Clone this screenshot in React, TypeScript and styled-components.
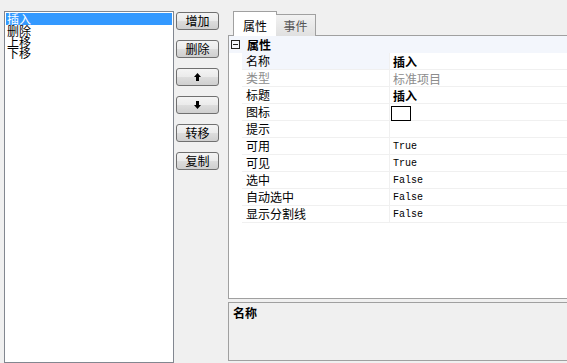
import { FC } from 'react';
import styled, { createGlobalStyle, css } from 'styled-components';

const GlobalStyle = createGlobalStyle`
	html, body {
		margin: 0;
		padding: 0;
		background: #f0f0f0;
		width: 567px;
		height: 363px;
		overflow: hidden;
	}
	body {
		font-family: 'Noto Sans CJK SC', 'Liberation Sans', sans-serif;
		font-size: 12px;
		color: #000;
	}
`;

interface PropRow {
	name: string;
	value?: string;
	bold?: boolean;
	mono?: boolean;
	disabled?: boolean;
	selected?: boolean;
	icon?: boolean;
}

const ITEMS = ['插入', '删除', '上移', '下移'];

const ROWS: PropRow[] = [
	{ name: '名称', value: '插入', bold: true, selected: true },
	{ name: '类型', value: '标准项目', disabled: true },
	{ name: '标题', value: '插入', bold: true },
	{ name: '图标', icon: true },
	{ name: '提示' },
	{ name: '可用', value: 'True', mono: true },
	{ name: '可见', value: 'True', mono: true },
	{ name: '选中', value: 'False', mono: true },
	{ name: '自动选中', value: 'False', mono: true },
	{ name: '显示分割线', value: 'False', mono: true },
];

const Arrow: FC<{ down?: boolean }> = ({ down }) => (
	<svg width="7" height="8" viewBox="0 0 7 8" style={{ transform: down ? 'rotate(180deg)' : undefined }}>
		<path d="M3.5 0 L7 4 L5 4 L5 8 L2 8 L2 4 L0 4 Z" fill="#000" />
	</svg>
);

export default function App() {
	return (
		<>
			<GlobalStyle />
			<Root>
				<ListBox>
					{ITEMS.map((item, i) => (
						<ListItem key={item} $selected={i === 0}>
							{item}
						</ListItem>
					))}
				</ListBox>
				<ButtonColumn>
					<Button>增加</Button>
					<Button>删除</Button>
					<Button>
						<Arrow />
					</Button>
					<Button>
						<Arrow down />
					</Button>
					<Button>转移</Button>
					<Button>复制</Button>
				</ButtonColumn>
				<RightPane>
					<TabStrip>
						<Tab $active>属性</Tab>
						<Tab>事件</Tab>
					</TabStrip>
					<Grid>
						<CategoryRow>
							<Collapse />
							<CategoryLabel>属性</CategoryLabel>
						</CategoryRow>
						{ROWS.map((row) => (
							<Row key={row.name}>
								<Gutter />
								<NameCell $selected={!!row.selected} $disabled={!!row.disabled}>
									{row.name}
								</NameCell>
								<ValueCell
									$bold={!!row.bold}
									$mono={!!row.mono}
									$disabled={!!row.disabled}
								>
									{row.icon ? <IconBox /> : row.value}
								</ValueCell>
							</Row>
						))}
					</Grid>
					<Description>
						<DescTitle>名称</DescTitle>
					</Description>
				</RightPane>
			</Root>
		</>
	);
}

const Root = styled.div`
	display: flex;
	align-items: flex-start;
	height: 363px;
`;

const ListBox = styled.div`
	box-sizing: border-box;
	margin: 11px 0 0 4px;
	width: 170px;
	height: 352px;
	border: 1px solid #828790;
	background: #fff;
	padding: 1px;
`;

const ListItem = styled.div<{ $selected: boolean }>`
	height: 11px;
	line-height: 11px;
	padding-left: 1px;
	white-space: nowrap;

	${({ $selected }) =>
		$selected &&
		css`
			background: #3399ff;
			color: #fff;
		`};

	&:first-child {
		height: 12px;
		line-height: 12px;
	}
`;

const ButtonColumn = styled.div`
	display: flex;
	flex-direction: column;
	gap: 10px;
	margin-left: 2px;
	padding-top: 12px;
	width: 43px;
`;

const Button = styled.button`
	box-sizing: border-box;
	height: 18px;
	width: 43px;
	padding: 0;
	display: flex;
	align-items: center;
	justify-content: center;
	border: 1px solid #707070;
	border-radius: 3px;
	background: linear-gradient(#f4f4f4 0%, #ebebeb 48%, #dddddd 52%, #cfcfcf 100%);
	font-family: 'Noto Sans CJK SC', 'Liberation Sans', sans-serif;
	font-size: 12px;
	line-height: 12px;
	color: #000;
`;

const RightPane = styled.div`
	flex: 1;
	margin-left: 9px;
	padding-top: 12px;
	display: flex;
	flex-direction: column;
	height: 351px;
`;

const TabStrip = styled.div`
	display: flex;
	align-items: flex-end;
	padding-left: 5px;
	height: 24px;
	position: relative;
	z-index: 1;
	margin-bottom: -1px;
`;

const Tab = styled.div<{ $active?: boolean }>`
	box-sizing: border-box;
	display: flex;
	align-items: center;
	justify-content: center;
	border: 1px solid #a0a0a0;
	font-size: 12px;

	${({ $active }) =>
		$active
			? css`
					width: 44px;
					height: 25px;
					background: #fff;
					border-bottom: none;
					padding-top: 2px;
				`
			: css`
					width: 40px;
					height: 22px;
					margin-left: -1px;
					background: linear-gradient(#f2f2f2, #e0e0e0);
					border-left: none;
					border-bottom: none;
					color: #555;
				`};
`;

const Grid = styled.div`
	box-sizing: border-box;
	height: 264px;
	border: 1px solid #a0a0a0;
	border-right: none;
	background: #fff;
`;

const CategoryRow = styled.div`
	height: 17px;
	display: flex;
	align-items: center;
	background: #f3f6fc;
	padding-left: 2px;
`;

const Collapse = styled.span`
	box-sizing: border-box;
	position: relative;
	width: 9px;
	height: 9px;
	border: 1px solid #222;
	margin-right: 7px;

	&::after {
		content: '';
		position: absolute;
		left: 1px;
		right: 1px;
		top: 3px;
		height: 1px;
		background: #222;
	}
`;

const CategoryLabel = styled.span`
	font-weight: bold;
`;

const Row = styled.div`
	box-sizing: border-box;
	height: 17px;
	display: flex;
`;

const Gutter = styled.div`
	width: 13px;
	flex: none;
`;

const NameCell = styled.div<{ $selected: boolean; $disabled: boolean }>`
	box-sizing: border-box;
	width: 148px;
	flex: none;
	padding-left: 4px;
	border-bottom: 1px solid #f0f0f0;
	border-right: 1px solid #f0f0f0;
	line-height: 16px;
	white-space: nowrap;
	background: ${({ $selected }) => ($selected ? '#f3f6fc' : '#fff')};
	color: ${({ $disabled }) => ($disabled ? '#8c8c8c' : '#000')};
`;

const ValueCell = styled.div<{ $bold: boolean; $mono: boolean; $disabled: boolean }>`
	box-sizing: border-box;
	flex: 1;
	display: flex;
	align-items: center;
	padding-left: 3px;
	border-bottom: 1px solid #f0f0f0;
	white-space: nowrap;
	font-weight: ${({ $bold }) => ($bold ? 'bold' : 'normal')};
	color: ${({ $disabled }) => ($disabled ? '#8c8c8c' : '#000')};

	${({ $mono }) =>
		$mono &&
		css`
			font-family: 'Liberation Mono', monospace;
			font-size: 10px;
		`};
`;

const IconBox = styled.span`
	box-sizing: border-box;
	width: 20px;
	height: 15px;
	margin-left: -2px;
	margin-top: 2px;
	border: 1px solid #000;
	background: #fff;
`;

const Description = styled.div`
	box-sizing: border-box;
	margin-top: 3px;
	height: 59px;
	border: 1px solid #a0a0a0;
	border-right: none;
	background: #f0f0f0;
	padding: 3px 0 0 4px;
`;

const DescTitle = styled.div`
	font-weight: bold;
	line-height: 14px;
`;
